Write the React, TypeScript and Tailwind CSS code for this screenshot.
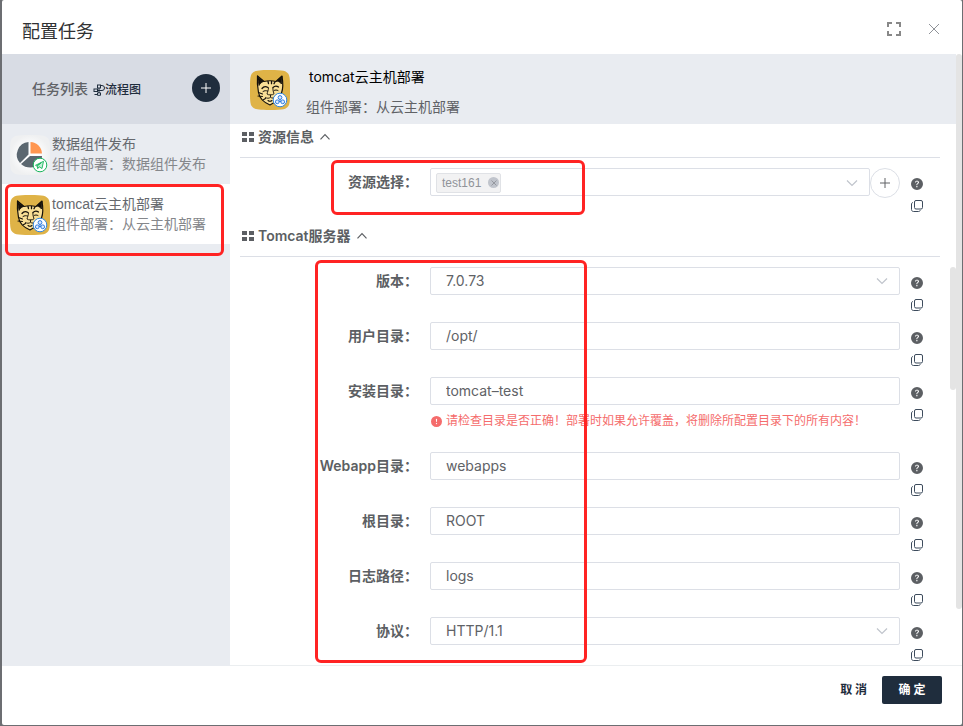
import { useState } from "react";
import clsx from "clsx";
import { BsExclamationCircleFill, BsQuestionCircleFill } from "react-icons/bs";

type Field = {
  id: string;
  label: string;
  value: string;
  select?: boolean;
  error?: string;
};

const fields: Field[] = [
  { id: "version", label: "版本", value: "7.0.73", select: true },
  { id: "user-dir", label: "用户目录", value: "/opt/" },
  {
    id: "install-dir",
    label: "安装目录",
    value: "tomcat–test",
    error: "请检查目录是否正确！部署时如果允许覆盖，将删除所配置目录下的所有内容！",
  },
  { id: "webapp-dir", label: "Webapp目录", value: "webapps" },
  { id: "root-dir", label: "根目录", value: "ROOT" },
  { id: "log-path", label: "日志路径", value: "logs" },
  { id: "protocol", label: "协议", value: "HTTP/1.1", select: true },
];

function PlusIcon({ className }: { className?: string }) {
  return (
    <svg viewBox="0 0 10 10" className={className} fill="none" stroke="currentColor" aria-hidden="true">
      <path d="M5 0v10M0 5h10" />
    </svg>
  );
}

function ChevronIcon({ up, className }: { up?: boolean; className?: string }) {
  return (
    <svg viewBox="0 0 12 8" className={clsx("h-2 w-3", className)} fill="none" stroke="currentColor" strokeWidth="1.200" aria-hidden="true">
      <path d={up ? "M1.5 6.3L6 1.7l4.500 4.600" : "M1 1.500L6 6.500l5-5"} />
    </svg>
  );
}

function CopyIcon() {
  return (
    <svg viewBox="0 0 12 12" className="size-3" fill="none" stroke="#3d4b5c" aria-hidden="true">
      <rect x="3.500" y="0.500" width="8" height="8.500" rx="1.500" />
      <path d="M2 2.500C1 2.700.5 3.200.5 4v5.500c0 1.200.8 2 2 2h5c1 0 1.600-.5 1.800-1.200" />
    </svg>
  );
}

function FlowIcon() {
  return (
    <svg viewBox="0 0 12 12" className="size-3" fill="none" stroke="#1f2d3d" aria-hidden="true">
      <rect x="4.500" y="1" width="3" height="3" />
      <rect x="1" y="5" width="3.500" height="2.500" />
      <path d="M7.500 1.500H9a2.500 2.500 0 0 1 0 5H4.500M6 4v5M4.500 8.800h3v2.500h-3zM4.500 10.500h-3" />
    </svg>
  );
}

function TomcatIcon() {
  return (
    <svg viewBox="0 0 40 40" className="size-10 shrink-0" aria-hidden="true">
      <path d="M20 0C34 0 36 1 38 3.500S40 10 40 20s0 14-2 16.500S34 40 20 40 4 39 2 36.500 0 30 0 20 0 6 2 3.500 6 0 20 0z" fill="#dfb347" />
      <path d="M7.500 6l6.500 5.500c4-1 8-1 12 0L32 6c1 6 1 12-.5 17-1.500 4-6 9.500-11.500 12-6-2-10.500-6.500-11.500-12.500C7.500 17 7 12 7.500 6z" fill="#f9df96" />
      <g fill="none" stroke="#15110a" strokeLinecap="round" strokeLinejoin="round">
        <path d="M7.500 6c-.5 6 0 11 1 16.500C9.500 28 14 32.500 20 35c5.500-2.500 10-8 11.500-12S33 12 32 6l-6 5.500c-4-1-8-1-12 0z" strokeWidth="1.200" />
        <path d="M7.500 6.500l1.500 9c1-2 2.500-3.300 4.500-4zM32 6.500l-.5 7.500c-1-1.500-2.500-2.500-4.500-3z" fill="#15110a" strokeWidth="0.800" />
        <path d="M18 11.500l.500 2M21.500 11.500v2.200M25 12l-1 1.700" strokeWidth="1.300" />
        <path d="M12 18.500c1.500-2 4-2.300 6-1M23 17.500c1.500-1.500 4-1.500 5.500-.5" strokeWidth="1.300" />
        <path d="M13 21.500c1.500-1 3-1 4.500-.5M24 20.500c1.300-.7 2.700-.7 4 0" strokeWidth="1" />
        <path d="M18.500 18c0 2-1 4-1.500 6 1.500 1.300 5.500 1.300 7-.2-.8-2-1.200-4-1.200-5.800M20.500 25v2.200c-1.500 1.500-3.500 1.300-5 .3M20.500 27.200c1.500 1.500 3.500 1 5 0" strokeWidth="0.900" />
        <path d="M8.500 22.500l4 1.500M8 26l4.500.5M13 30l2.500-1.500M18 30.500c1.300 1 2.700 1 4 0" strokeWidth="1.100" />
      </g>
      <circle cx="30" cy="30" r="6.800" fill="#fff" stroke="#2f86e0" />
      <g fill="#dbeafe" stroke="#2f7de0" strokeWidth="1">
        <circle cx="30" cy="27.500" r="1.900" />
        <circle cx="27.300" cy="31.800" r="1.900" />
        <circle cx="32.700" cy="31.800" r="1.900" />
        <path d="M30 29v2M28.800 31.500h2.400" />
      </g>
    </svg>
  );
}

function DataIcon() {
  return (
    <svg viewBox="0 0 40 40" className="size-10 shrink-0" aria-hidden="true">
      <defs>
        <radialGradient id="tile">
          <stop offset="0.4" stopColor="#fff" />
          <stop offset="1" stopColor="#eff0f1" />
        </radialGradient>
      </defs>
      <path d="M20 0C34 0 36 1 38 3.500S40 10 40 20s0 14-2 16.500S34 40 20 40 4 39 2 36.500 0 30 0 20 0 6 2 3.500 6 0 20 0z" fill="url(#tile)" />
      <path d="M18.500 7v12.500l-8.500 8.500A12.700 12.700 0 0 1 18.500 7z" fill="#5b6770" />
      <path d="M20.500 7A12 12 0 0 1 32 18.500H20.500z" fill="#ff9650" />
      <path d="M20 21h12c0 7-5 11.500-11.500 11.500-4 0-7-1-9.500-3.500z" fill="#5b6770" />
      <circle cx="30" cy="30" r="6.800" fill="#fff" stroke="#17b55c" />
      <path d="M25.500 30.300l8-4-1.500 7.200-3-1.800-1.300 2-.5-2.700 4-3.200-4.500 3z" fill="#c5f0d8" stroke="#17b55c" strokeWidth="0.900" strokeLinejoin="round" />
    </svg>
  );
}

function SectionHead({ title }: { title: string }) {
  return (
    <div className="h-[34px] border-b border-[#dcdfe6]">
      <h3>
        <button type="button" className="flex h-[26px] items-center text-sm font-semibold text-[#5c5f63]">
          <span className="mr-1 ml-0.5 grid grid-cols-2 gap-0.5" aria-hidden="true">
            <i className="h-1 w-[5px] bg-current" />
            <i className="h-1 w-[5px] bg-current" />
            <i className="h-1 w-[5px] bg-current" />
            <i className="h-1 w-[5px] bg-current" />
          </span>
          {title}
          <ChevronIcon up className="ml-[5px]" />
        </button>
      </h3>
    </div>
  );
}

function RowActions() {
  return (
    <div className="flex w-10 shrink-0 flex-col items-start gap-2.5 pt-2.5 pl-[11px]">
      <button type="button" aria-label="帮助" className="text-[#5c5f63]">
        <BsQuestionCircleFill className="size-3" />
      </button>
      <button type="button" aria-label="复制">
        <CopyIcon />
      </button>
    </div>
  );
}

const labelClass = "w-[190px] shrink-0 pr-3 text-right text-sm leading-7 font-semibold text-[#5c5f63]";
const controlClass = "h-7 w-full appearance-none rounded-xs border border-[#dcdfe6] bg-white px-[15px] text-sm text-[#606266] outline-none";

function FieldRow({ field }: { field: Field }) {
  const [value, setValue] = useState(field.value);
  return (
    <div className={clsx("flex", field.error ? "h-[75px]" : "h-[55px]")}>
      <label htmlFor={field.id} className={labelClass}>
        {field.label}：
      </label>
      <div className="min-w-0 flex-1">
        {field.select ? (
          <div className="relative">
            <select id={field.id} className={controlClass} value={value} onChange={e => setValue(e.target.value)}>
              <option>{field.value}</option>
            </select>
            <ChevronIcon className="pointer-events-none absolute top-2.5 right-3 text-[#c0c4cc]" />
          </div>
        ) : (
          <input id={field.id} className={clsx(controlClass, "pb-0.5")} value={value} onChange={e => setValue(e.target.value)} />
        )}
        {field.error && (
          <p className="flex items-center gap-1 pt-1.5 pl-px text-xs leading-5 whitespace-nowrap text-[#f56c6c]">
            <BsExclamationCircleFill className="size-[11px]" />
            {field.error}
          </p>
        )}
      </div>
      <RowActions />
    </div>
  );
}

function Sidebar() {
  return (
    <aside className="w-[228px] shrink-0 bg-[#e9ecf1]">
      <div className="flex h-[70px] items-center bg-[#d8dce4] pr-2.5 pl-[30px]">
        <h2 className="text-sm font-medium text-[#606266]">任务列表</h2>
        <a href="#flow" className="ml-[5px] flex items-center pt-0.5 text-xs font-medium text-[#1f2d3d]">
          <FlowIcon />
          流程图
        </a>
        <button type="button" aria-label="添加任务" className="mb-0.5 ml-auto flex size-7 items-center justify-center rounded-full bg-[#1f2d3d] text-white">
          <PlusIcon className="size-2.5" />
        </button>
      </div>
      <ul className="font-['Liberation_Sans','Noto_Sans_CJK_SC',sans-serif] text-sm leading-5">
        <li className="flex h-[60px] items-start gap-0.5 pt-[11px] pl-2">
          <DataIcon />
          <div className="-mt-px">
            <p className="text-[#66696e]">数据组件发布</p>
            <p className="text-[#85878b]">组件部署：数据组件发布</p>
          </div>
        </li>
        <li className="relative flex h-[60px] items-start gap-0.5 bg-white pt-[11px] pl-2">
          <TomcatIcon />
          <div className="-mt-px">
            <p className="text-[#66696e]">tomcat云主机部署</p>
            <p className="text-[#85878b]">组件部署：从云主机部署</p>
          </div>
          <div className="pointer-events-none absolute top-0 right-1.5 -bottom-3 left-[3px] rounded-md border-3 border-[#ff2323]" />
        </li>
      </ul>
    </aside>
  );
}

export default function App() {
  return (
    <div className="h-screen bg-[#6c6e72] pr-px pb-px pl-0.5 font-[Inter,'Noto_Sans_CJK_SC',sans-serif]">
      <div role="dialog" aria-labelledby="dialog-title" className="flex h-full flex-col overflow-hidden rounded-xs bg-white">
        <header className="flex h-[54px] shrink-0 items-center pr-[22px] pl-5">
          <h1 id="dialog-title" className="pt-2.5 text-lg text-[#303133]">
            配置任务
          </h1>
          <button type="button" aria-label="全屏" className="mt-1 ml-auto text-[#888]">
            <svg viewBox="0 0 14 14" className="size-3.5" fill="none" stroke="currentColor" strokeWidth="2">
              <path d="M1 5V1h4M9 1h4v4M13 9v4H9M5 13H1V9" />
            </svg>
          </button>
          <button type="button" aria-label="关闭" className="mt-1 ml-[27px] text-[#909399]">
            <svg viewBox="0 0 12 12" className="size-3" fill="none" stroke="currentColor">
              <path d="M1 1l10 10M11 1L1 11" />
            </svg>
          </button>
        </header>

        <div className="flex min-h-0 flex-1">
          <Sidebar />
          <main className="relative flex min-w-0 flex-1 flex-col overflow-hidden border-b border-[#ebeef0] pr-1.5">
            <div className="flex h-[70px] shrink-0 items-start bg-[#e9ecf1] pt-4 pl-5">
              <TomcatIcon />
              <div className="-mt-[3px] ml-4 flex flex-col gap-2.5 text-sm leading-5">
                <p className="pl-[3px] text-black">tomcat云主机部署</p>
                <p className="text-[#606266]">组件部署：从云主机部署</p>
              </div>
            </div>

            <form className="pr-4 pl-2.5">
              <section className="relative">
                <SectionHead title="资源信息" />
                <div className="flex h-[65px] pt-2.5">
                  <label htmlFor="resource" className={labelClass}>
                    资源选择：
                  </label>
                  <div className="flex min-w-0 flex-1">
                    <div className="flex h-7 min-w-0 flex-1 items-center rounded-xs border border-[#dcdfe6] pt-px pr-[11px] pl-[5px]">
                      <span className="flex h-5 shrink-0 items-center gap-[7px] rounded-xs border border-[#e0e2e6] bg-[#f2f2f3] pr-px pl-[5px] font-['Liberation_Sans',sans-serif] text-xs text-[#909399]">
                        test161
                        <button type="button" aria-label="移除 test161" className="flex size-[11px] items-center justify-center rounded-full bg-[#c0c4cc] text-[#8a8d93]">
                          <svg viewBox="0 0 6 6" className="size-1.5" fill="none" stroke="currentColor" strokeWidth="0.800">
                            <path d="M.5.5l5 5M5.500.5l-5 5" />
                          </svg>
                        </button>
                      </span>
                      <input id="resource" className="min-w-0 flex-1 outline-none" />
                      <ChevronIcon className="text-[#c0c4cc]" />
                    </div>
                    <button type="button" aria-label="添加资源" className="flex size-[30px] shrink-0 items-center justify-center rounded-full border border-[#dcdfe6] text-[#606266]">
                      <PlusIcon className="size-2.5" />
                    </button>
                  </div>
                  <RowActions />
                </div>
                <div className="pointer-events-none absolute top-9 left-[91px] h-[55px] w-[254px] rounded-md border-3 border-[#ff2323]" />
              </section>

              <section className="relative">
                <SectionHead title="Tomcat服务器" />
                <div className="pt-2.5">
                  {fields.map(f => (
                    <FieldRow key={f.id} field={f} />
                  ))}
                </div>
                <div className="pointer-events-none absolute top-[37px] bottom-[9px] left-[75px] w-[272px] rounded-md border-3 border-[#ff2323]" />
              </section>
            </form>

            {/* scroll bars */}
            <div className="absolute top-0 right-0 h-[555px] w-1.5 rounded-full bg-[#e4e4e4]" />
            <div className="absolute top-[213px] right-1.5 h-[123px] w-1.5 rounded-full bg-[#e4e4e4]" />
          </main>
        </div>

        <footer className="flex h-[59px] shrink-0 items-start justify-end gap-[15px] pt-2.5 pr-5 text-xs font-bold">
          <button type="button" className="h-7 text-[#1f2d3d]">
            取 消
          </button>
          <button type="button" className="h-7 min-w-[60px] rounded-xs bg-[#1f2d3d] px-4 text-white">
            确 定
          </button>
        </footer>
      </div>
    </div>
  );
}
